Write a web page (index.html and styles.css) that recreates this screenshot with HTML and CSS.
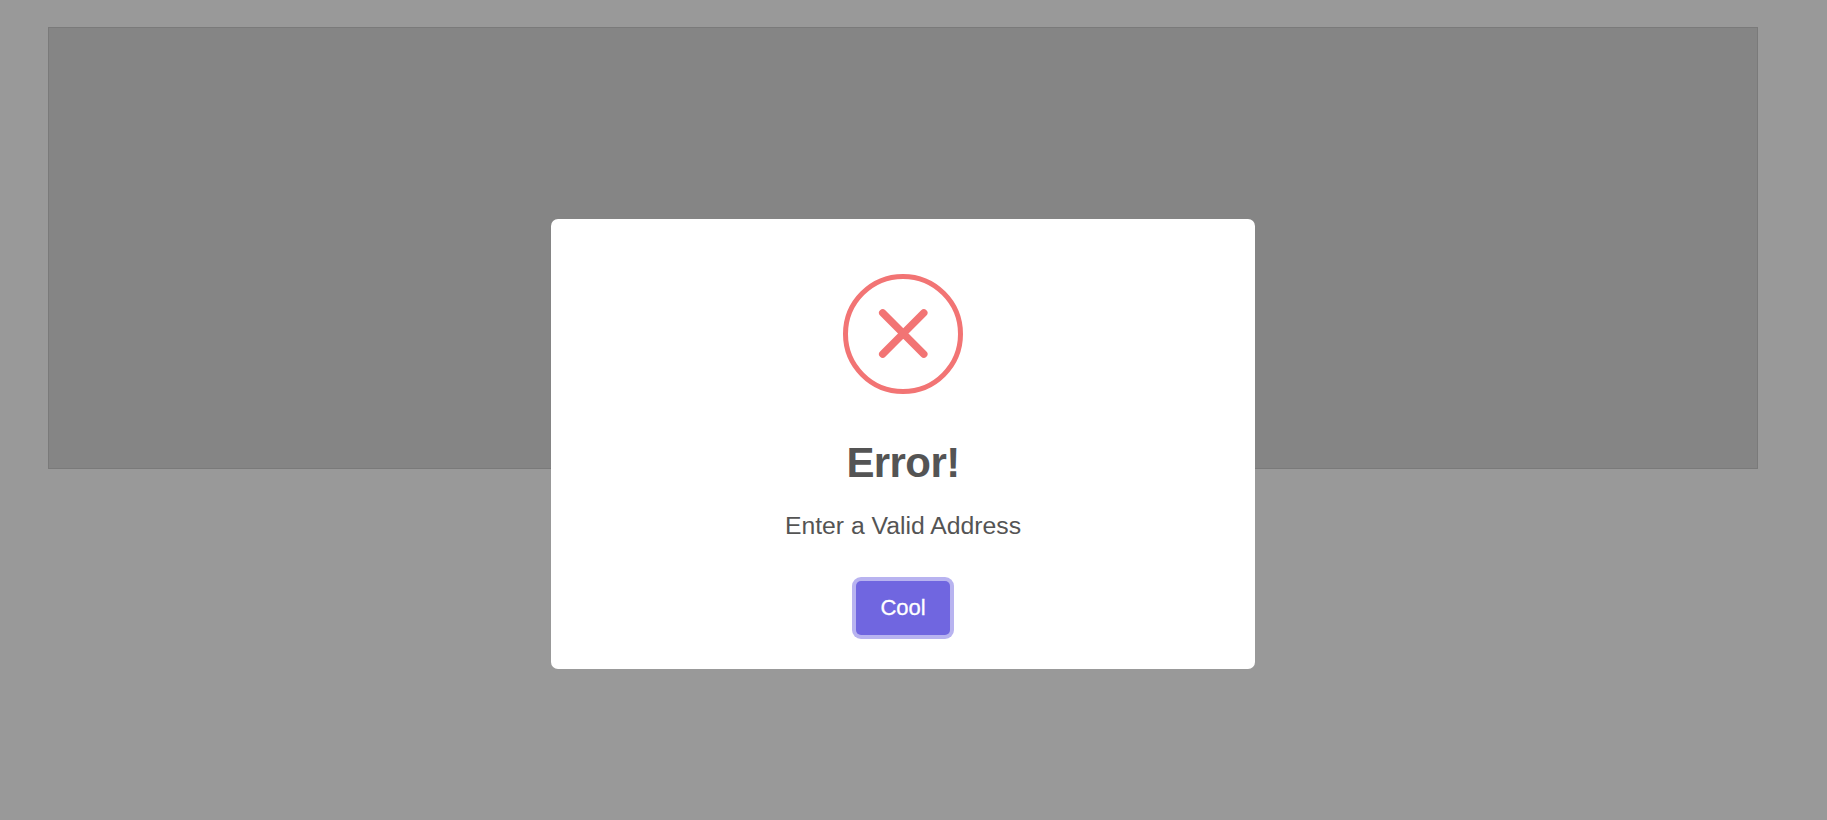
FILE: index.html
```
<!DOCTYPE html>
<html lang="en">
<head>
<meta charset="utf-8">
<title>Error</title>
<link rel="stylesheet" href="styles.css">
</head>
<body>
<main class="page"><div class="panel"></div></main>
<div class="overlay">
<section class="dialog" role="dialog" aria-labelledby="title">
<svg class="icon" viewBox="0 0 120 120" fill="none" stroke="#f27474">
<circle cx="60" cy="60" r="57.5" stroke-width="5"/>
<path d="M39.7 38.8 80.8 80.1M80.8 38.8 39.7 80.1" stroke-width="7.4" stroke-linecap="round"/>
</svg>
<h2 class="title" id="title">Error!</h2>
<p class="message">Enter a Valid Address</p>
<button class="confirm" type="button">Cool</button>
</section>
</div>
</body>
</html>
```
FILE: styles.css
```
body {
  margin: 0;
  background: #999;
  font-family: "Liberation Sans", Arial, sans-serif;
  overflow: hidden;
}
.page {
  box-sizing: border-box;
  height: 820px;
  padding: 27px 69px 0 48px;
}
.panel {
  box-sizing: border-box;
  height: 442px;
  background: #858585;
  border: 1px solid #7a7a7a;
}
.overlay {
  position: absolute;
  inset: 0;
  padding: 219px 21px 0 0;
  display: flex;
  justify-content: center;
  align-items: flex-start;
}
.dialog {
  box-sizing: border-box;
  width: 704px;
  height: 450px;
  padding-top: 55px;
  display: flex;
  flex-direction: column;
  align-items: center;
  background: #fff;
  border-radius: 7px;
  color: #545454;
}
.icon {
  width: 120px;
  height: 120px;
  flex: none;
}
.title {
  margin: 45px 0 0;
  font-size: 42px;
  line-height: 48px;
  font-weight: 700;
  letter-spacing: -0.6px;
}
.message {
  margin: 25px 0 0;
  font-size: 24.75px;
  line-height: 28px;
}
.confirm {
  width: 94px;
  height: 54px;
  margin: 41px 0 0;
  padding: 0;
  border: 0;
  border-radius: 5px;
  background: #7066e0;
  box-shadow: 0 0 0 4px #b8b3f0;
  color: #fff;
  font: 22px "Liberation Sans", Arial, sans-serif;
  -webkit-text-stroke: 0.3px #fff;
}
```
